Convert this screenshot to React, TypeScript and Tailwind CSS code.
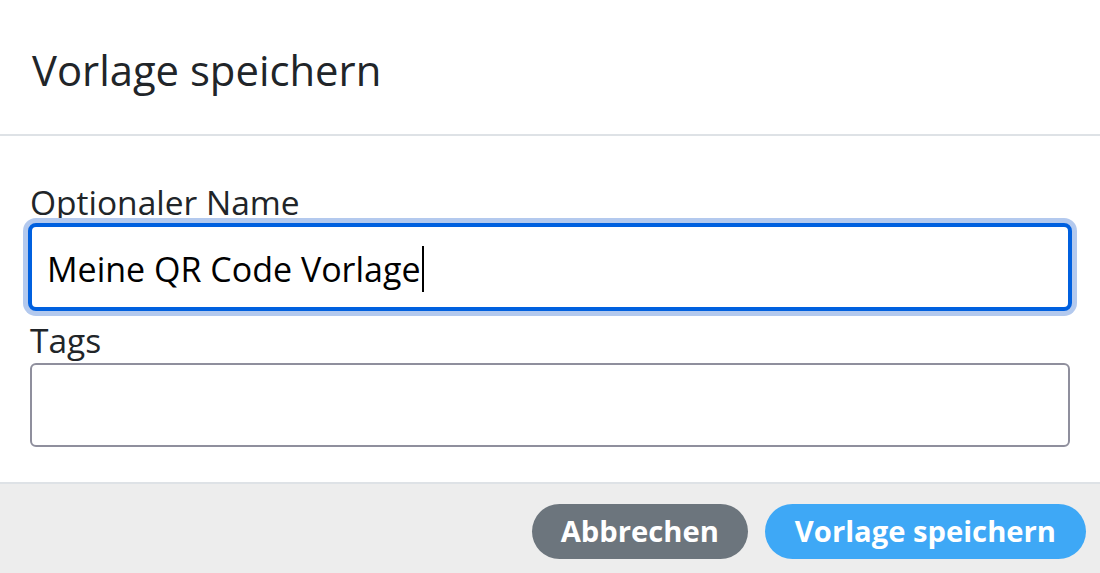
import React from 'react';

const Field = ({ label, value, focused }: { label: string; value?: string; focused?: boolean }) => (
  <div className="flex flex-col">
    <label className="text-[33.5px] leading-[42px] mb-[2px] text-[#212529]">{label}</label>
    {focused ? (
      <div className="-mx-[2px] -my-[2px] h-[88px] rounded-[8px] border-4 border-[#0060df] ring-[5px] ring-[#b3c9ee] flex items-center pl-[15px] pt-[4px] bg-white">
        <span className="text-[34px] text-black">{value}</span>
        <span className="w-[2px] h-[46px] bg-black ml-[1px]" />
      </div>
    ) : (
      <div className="h-[84px] rounded-[6px] border-2 border-[#8f8f9d] bg-white" />
    )}
  </div>
);

export default function App() {
  return (
    <div className="w-[1100px] h-[573px] overflow-hidden bg-white font-['Open_Sans',sans-serif] text-[#212529] flex flex-col">
      {/* Header */}
      <div className="h-[136px] shrink-0 flex items-center px-[32px] border-b-2 border-[#dee2e6]">
        <h5 className="text-[41.8px] leading-none mt-[6px]">Vorlage speichern</h5>
      </div>

      {/* Body */}
      <div className="px-[30px] pt-[45px] pb-[35px] flex flex-col gap-[10px]">
        <Field label="Optionaler Name" value="Meine QR Code Vorlage" focused />
        <Field label="Tags" />
      </div>

      {/* Footer */}
      <div className="flex-1 border-t-2 border-[#dee2e6] bg-[#ededed] flex justify-end items-start pt-[20px] pr-[14px] gap-[17px]">
        <button className="h-[55px] px-[29px] rounded-full bg-[#6c757d] text-white font-bold text-[29.2px] leading-none">
          Abbrechen
        </button>
        <button className="h-[55px] px-[30px] rounded-full bg-[#3ea8f6] text-white font-bold text-[29.2px] leading-none">
          Vorlage speichern
        </button>
      </div>
    </div>
  );
}
